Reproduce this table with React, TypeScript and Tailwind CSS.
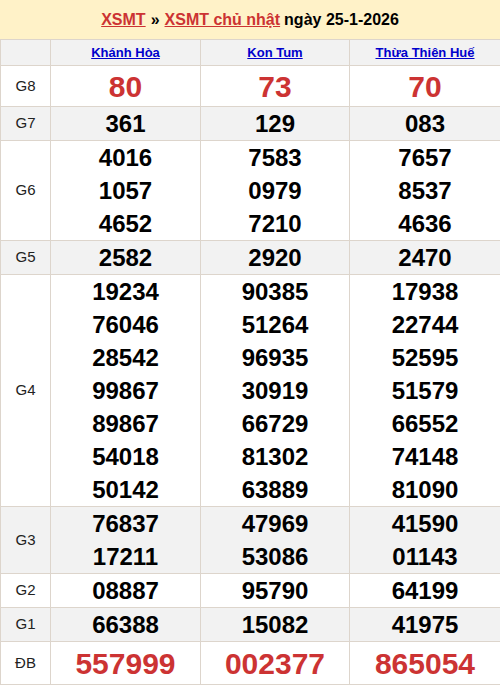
import React from "react";

type Row = { label: string; vals: string[][]; big?: boolean; gray?: boolean; h?: string };

const rows: Row[] = [
  { label: "G8", vals: [["80"], ["73"], ["70"]], big: true, h: "h-[40px]" },
  { label: "G7", vals: [["361"], ["129"], ["083"]], gray: true },
  { label: "G6", vals: [["4016", "1057", "4652"], ["7583", "0979", "7210"], ["7657", "8537", "4636"]] },
  { label: "G5", vals: [["2582"], ["2920"], ["2470"]], gray: true },
  {
    label: "G4",
    vals: [
      ["19234", "76046", "28542", "99867", "89867", "54018", "50142"],
      ["90385", "51264", "96935", "30919", "66729", "81302", "63889"],
      ["17938", "22744", "52595", "51579", "66552", "74148", "81090"],
    ],
  },
  { label: "G3", vals: [["76837", "17211"], ["47969", "53086"], ["41590", "01143"]], gray: true },
  { label: "G2", vals: [["08887"], ["95790"], ["64199"]] },
  { label: "G1", vals: [["66388"], ["15082"], ["41975"]], gray: true },
  { label: "ĐB", vals: [["557999"], ["002377"], ["865054"]], big: true, h: "h-[42px]" },
];

export default function App() {
  return (
    <div className="w-[500px] bg-white text-black" style={{ fontFamily: '"Liberation Sans", Arial, sans-serif' }}>
      <div className="h-[39px] bg-[#fff2c8] flex items-center justify-center text-[16px] font-bold">
        <a href="#" className="text-[#cc3333] underline">XSMT</a>
        <span className="mx-[5px]">»</span>
        <a href="#" className="text-[#cc3333] underline">XSMT chủ nhật</a>
        <span className="ml-[4px]">ngày 25-1-2026</span>
      </div>
      <table className="w-[500px] border-collapse table-fixed">
        <colgroup>
          <col className="w-[50px]" />
          <col className="w-[150px]" />
          <col className="w-[149px]" />
          <col className="w-[151px]" />
        </colgroup>
        <thead>
          <tr className="bg-[#f2f2f2]">
            <th className="border border-[#ddd5cc] h-[26px] p-0"></th>
            {["Khánh Hòa", "Kon Tum", "Thừa Thiên Huế"].map((n) => (
              <th key={n} className="border border-[#ddd5cc] h-[26px] p-0 text-[13px] font-bold text-center align-middle">
                <a href="#" className="text-[#0000cc] underline">{n}</a>
              </th>
            ))}
          </tr>
        </thead>
        <tbody>
          {rows.map((r) => (
            <tr key={r.label} className={r.gray ? "bg-[#f2f2f2]" : "bg-white"}>
              <td className="border border-[#ddd5cc] p-0 text-center align-middle text-[15px] text-[#222]">{r.label}</td>
              {r.vals.map((col, i) => (
                <td key={i} className="border border-[#ddd5cc] p-0 text-center align-middle">
                  {col.map((v, j) => (
                    <div
                      key={j}
                      className={
                        r.big
                          ? `${r.h} flex items-center justify-center text-[30px] font-bold text-[#cc3333]`
                          : "h-[33px] leading-[33px] text-[24px] font-bold text-black"
                      }
                    >
                      {v}
                    </div>
                  ))}
                </td>
              ))}
            </tr>
          ))}
        </tbody>
      </table>
    </div>
  );
}
